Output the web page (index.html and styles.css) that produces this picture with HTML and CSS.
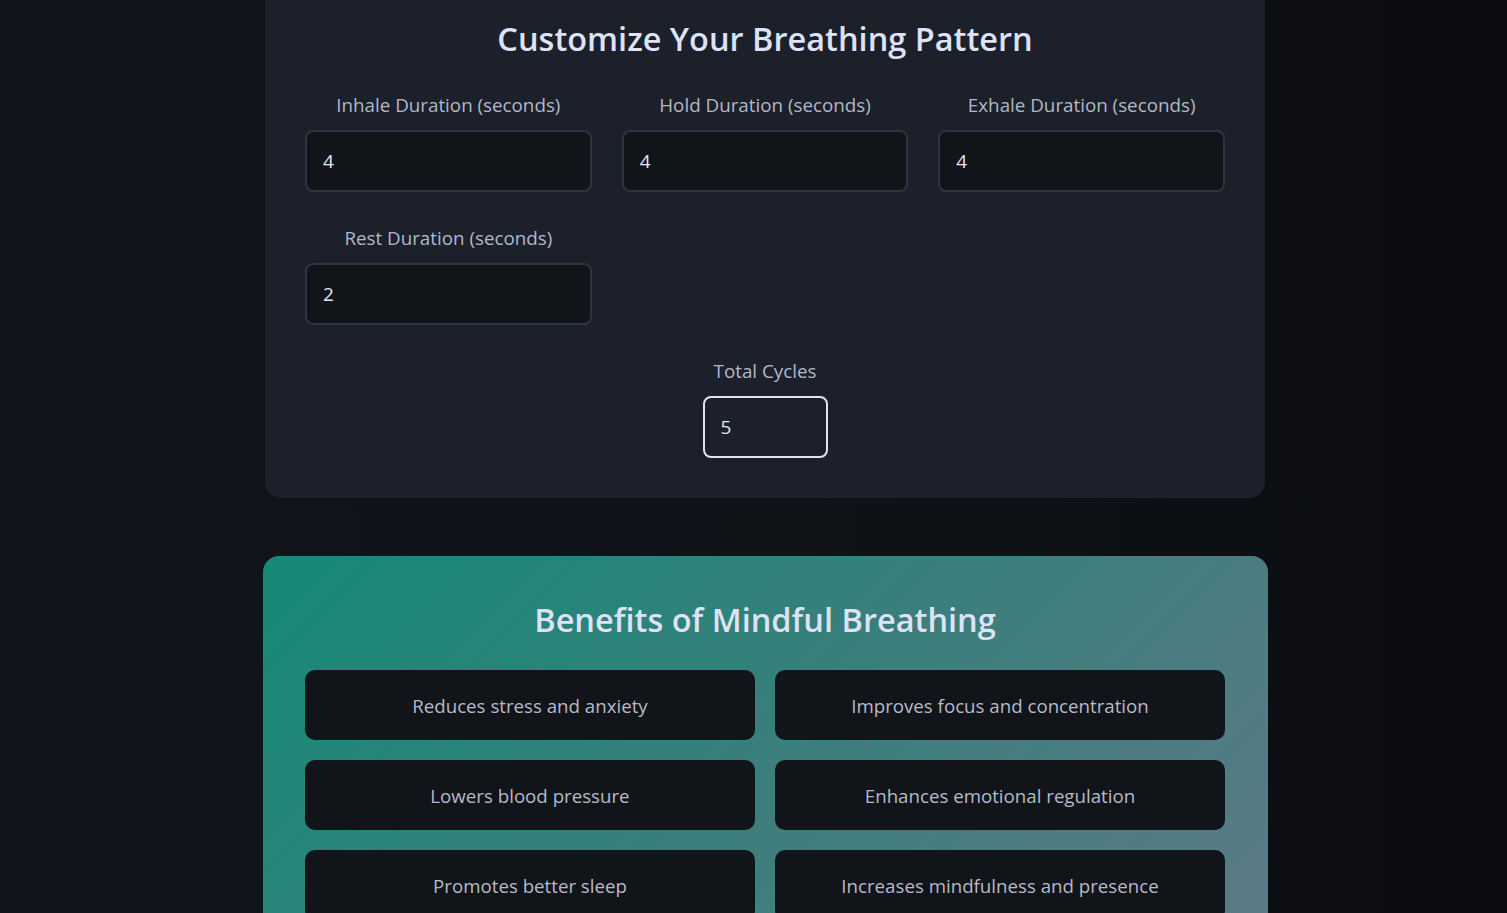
FILE: index.html
```html
<!DOCTYPE html>
<html lang="en">
<head>
<meta charset="UTF-8">
<title>Breathing</title>
<link rel="stylesheet" href="styles.css">
</head>
<body>
<main class="page">
  <section class="card settings">
    <h2 class="card-title">Customize Your Breathing Pattern</h2>
    <div class="fields">
      <div class="field">
        <label class="field-label" for="inhale">Inhale Duration (seconds)</label>
        <input class="field-input" id="inhale" type="text" value="4">
      </div>
      <div class="field">
        <label class="field-label" for="hold">Hold Duration (seconds)</label>
        <input class="field-input" id="hold" type="text" value="4">
      </div>
      <div class="field">
        <label class="field-label" for="exhale">Exhale Duration (seconds)</label>
        <input class="field-input" id="exhale" type="text" value="4">
      </div>
      <div class="field">
        <label class="field-label" for="rest">Rest Duration (seconds)</label>
        <input class="field-input" id="rest" type="text" value="2">
      </div>
    </div>
    <div class="cycles">
      <label class="field-label" for="cycles">Total Cycles</label>
      <input class="field-input cycles-input" id="cycles" type="text" value="5">
    </div>
  </section>

  <section class="card benefits">
    <h2 class="card-title">Benefits of Mindful Breathing</h2>
    <div class="benefit-grid">
      <div class="benefit">Reduces stress and anxiety</div>
      <div class="benefit">Improves focus and concentration</div>
      <div class="benefit">Lowers blood pressure</div>
      <div class="benefit">Enhances emotional regulation</div>
      <div class="benefit">Promotes better sleep</div>
      <div class="benefit">Increases mindfulness and presence</div>
    </div>
  </section>
</main>
</body>
</html>
```

FILE: styles.css
```css
* { box-sizing: border-box; }

html, body {
  margin: 0;
  height: 100%;
}

body {
  background: linear-gradient(to right, #11141a 0%, #0f1217 50%, #0b0d11 100%);
  font-family: "Open Sans", "Noto Sans", sans-serif;
  color: #dde2f5;
  overflow: hidden;
  padding-left: 23px;
}

.page {
  width: 1000px;
  margin: -21px auto 0;
  display: flex;
  flex-direction: column;
  gap: 58px;
}

.card {
  border-radius: 16px;
  padding: 40px;
}

.settings {
  background: #1b202b;
}

.card-title {
  margin: 0;
  text-align: center;
  font-size: 32.5px;
  font-weight: 600;
  line-height: 40px;
  color: #dde2f7;
}

.fields {
  margin-top: 34px;
  display: grid;
  grid-template-columns: repeat(3, 1fr);
  column-gap: 30px;
  row-gap: 34px;
}

.field, .cycles {
  display: flex;
  flex-direction: column;
  align-items: stretch;
}

.field-label {
  text-align: center;
  font-size: 18.8px;
  line-height: 24px;
  color: #b3b7c8;
  margin-bottom: 13px;
}

.field-input {
  height: 62px;
  width: 100%;
  background: #111419;
  border: 2px solid #2d3544;
  border-radius: 8px;
  padding: 0 16px;
  font-family: inherit;
  font-size: 19px;
  color: #e1e5f5;
  outline: none;
}

.cycles {
  margin-top: 34px;
  align-items: center;
}

.cycles-input {
  width: 125px;
  background: #1b202b;
  border-color: #dde2f5;
}

.benefits {
  margin: 0 -2.5px;
  padding: 44px 42.5px 40px;
  background: linear-gradient(135deg, #158a76 0%, #3a7f7c 50%, #5e7a86 100%);
}

.benefit-grid {
  margin-top: 30px;
  display: grid;
  grid-template-columns: 1fr 1fr;
  gap: 20px;
}

.benefit {
  height: 70px;
  display: flex;
  align-items: center;
  justify-content: center;
  background: #111419;
  border-radius: 10px;
  font-size: 18.7px;
  color: #b7bac9;
}
```
